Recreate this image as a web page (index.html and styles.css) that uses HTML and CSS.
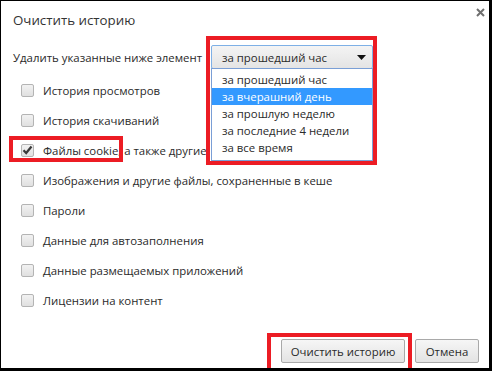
FILE: index.html
```html
<!DOCTYPE html>
<html lang="ru">
<head>
<meta charset="utf-8">
<title>Очистить историю</title>
<link rel="stylesheet" href="styles.css">
</head>
<body>
<div class="dialog">
  <div class="title-row">
    <div class="title">Очистить историю</div>
    <svg class="close" width="9" height="9" viewBox="0 0 9 9"><path d="M1 1 L8 8 M8 1 L1 8" stroke="#6f6f6f" stroke-width="2"/></svg>
  </div>
  <div class="period-row">
    <span class="period-label">Удалить указанные ниже элемент</span>
    <div class="select">
      <span>за прошедший час</span>
      <svg class="arrow" width="9" height="5" viewBox="0 0 9 5"><path d="M0 0 H9 L4.5 5 Z" fill="#111"/></svg>
    </div>
  </div>
  <ul class="options">
    <li class="option"><span class="box"></span>История просмотров</li>
    <li class="option"><span class="box"></span>История скачиваний</li>
    <li class="option"><span class="box checked"><svg width="11" height="10" viewBox="0 0 11 10"><path d="M1.5 5.2 L4.2 8 L9.5 1.5" stroke="#3a3a3a" stroke-width="2.2" fill="none"/></svg></span>Файлы cookie, а также другие</li>
    <li class="option"><span class="box"></span>Изображения и другие файлы, сохраненные в кеше</li>
    <li class="option"><span class="box"></span>Пароли</li>
    <li class="option"><span class="box"></span>Данные для автозаполнения</li>
    <li class="option"><span class="box"></span>Данные размещаемых приложений</li>
    <li class="option"><span class="box"></span>Лицензии на контент</li>
  </ul>
  <div class="footer">
    <button class="btn btn-clear">Очистить историю</button>
    <button class="btn">Отмена</button>
  </div>

  <div class="mark mark-select"></div>
  <ul class="dropdown">
    <li>за прошедший час</li>
    <li class="active">за вчерашний день</li>
    <li>за прошлую неделю</li>
    <li>за последние 4 недели</li>
    <li>за все время</li>
  </ul>
  <div class="mark mark-cookie"></div>
  <div class="mark mark-button"></div>
</div>
</body>
</html>
```

FILE: styles.css
```css
* { box-sizing: border-box; }
html, body { margin: 0; padding: 0; background: #fff; }
body {
  font-family: "Open Sans", "Noto Sans", sans-serif;
  color: #2a2a2a;
}
.dialog {
  position: relative;
  width: 492px;
  height: 371px;
  border-top: 1px solid #000;
  border-left: 1px solid #000;
  border-right: 3px solid #000;
  border-bottom: 3px solid #000;
  padding: 0 0 0 12px;
  display: flex;
  flex-direction: column;
  overflow: hidden;
}
.title-row {
  display: flex;
  justify-content: space-between;
  align-items: flex-start;
  padding-top: 9px;
  height: 42px;
}
.title {
  font-size: 13.3px;
  line-height: 20px;
  color: #333;
}
.close { margin: -2px 4px 0 0; }
.period-row {
  display: flex;
  align-items: center;
  height: 24px;
  margin-top: 2px;
  font-size: 11.4px;
}
.period-label {
  width: 198px;
  white-space: nowrap;
}
.select {
  position: relative;
  z-index: 3;
  width: 162px;
  height: 24px;
  border: 1px solid #7eb0e6;
  border-radius: 2px;
  background: linear-gradient(#f4f4f4, #e4e4e4);
  display: flex;
  align-items: center;
  justify-content: space-between;
  padding: 0 6px 0 10px;
}
.options {
  list-style: none;
  margin: 6px 0 0;
  padding: 0 0 0 8px;
  font-size: 11.4px;
}
.option {
  height: 30px;
  display: flex;
  align-items: center;
  white-space: nowrap;
}
.box {
  width: 13px;
  height: 13px;
  border: 1px solid #b4b4b4;
  border-radius: 2px;
  background: linear-gradient(#f2f2f2, #e0e0e0);
  margin-right: 9px;
  flex: none;
  display: flex;
  align-items: center;
  justify-content: center;
}
.footer {
  margin-top: auto;
  display: flex;
  justify-content: flex-end;
  gap: 10px;
  padding: 0 10px 5px 0;
}
.btn {
  font-family: "Open Sans", "Noto Sans", sans-serif;
  font-size: 11.4px;
  color: #2a2a2a;
  height: 24px;
  border: 1px solid #a9a9a9;
  border-radius: 2px;
  background: linear-gradient(#f6f6f6, #e3e3e3);
  padding: 0;
}
.btn-clear { width: 124px; }
.btn:not(.btn-clear) { width: 64px; }
.mark {
  position: absolute;
  border: 4px solid #ec1c24;
}
.mark-select {
  left: 205px;
  top: 35px;
  width: 171px;
  height: 129px;
  background: #fff;
  z-index: 2;
}
.dropdown {
  position: absolute;
  z-index: 4;
  left: 210px;
  top: 67px;
  width: 162px;
  height: 93px;
  margin: 0;
  padding: 2px 0 0;
  list-style: none;
  background: #fff;
  border: 1px solid #7a9fd6;
  font-size: 11.4px;
}
.dropdown li {
  height: 17px;
  line-height: 17px;
  padding-left: 10px;
  white-space: nowrap;
}
.dropdown li.active { background: #3399ff; color: #fff; }
.mark-cookie {
  left: 8px;
  top: 135px;
  width: 114px;
  height: 26px;
  z-index: 1;
}
.mark-button {
  left: 266px;
  top: 332px;
  width: 145px;
  height: 40px;
  z-index: 1;
}
```
